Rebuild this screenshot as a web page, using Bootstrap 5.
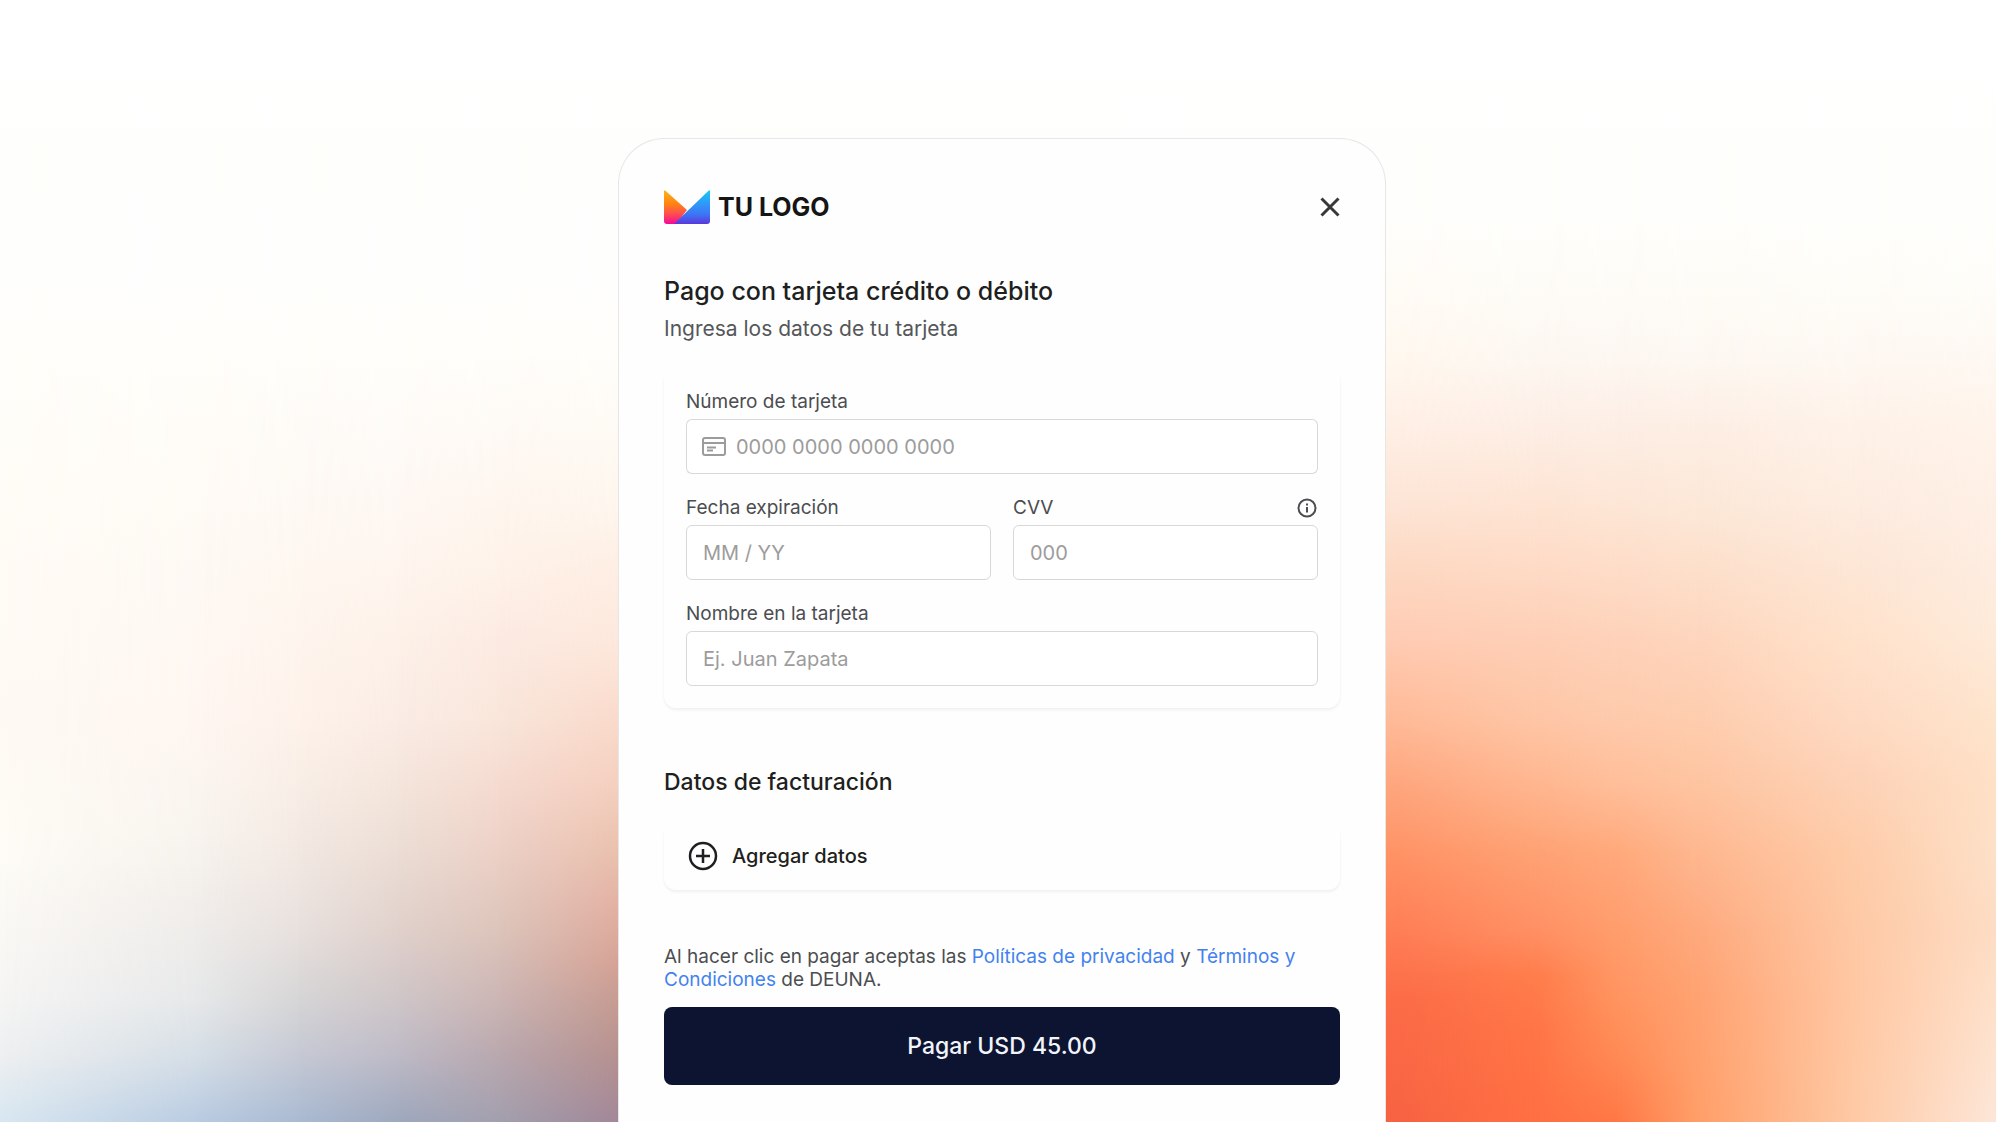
<!DOCTYPE html>
<html lang="es">
<head>
<meta charset="utf-8">
<meta name="viewport" content="width=device-width, initial-scale=1">
<title>Pago con tarjeta</title>
<link href="https://cdn.jsdelivr.net/npm/bootstrap@5.3.0/dist/css/bootstrap.min.css" rel="stylesheet">
<style>
  body { font-family: Inter, "Open Sans", sans-serif; color: #1e1f20; background: #fff; }

  /* Backdrop: vertical colour ramps, each faded in over the one before it */
  .backdrop { z-index: -1; }
  .ramp { position: absolute; inset: 0; -webkit-mask-image: linear-gradient(90deg, transparent var(--from), #000 var(--to)); mask-image: linear-gradient(90deg, transparent var(--from), #000 var(--to)); }
  .ramp-1 { -webkit-mask-image: none; mask-image: none; background: linear-gradient(#fff 4%, #fefefc 14%, #fefefd 24%, #fffefa 31%, #fffbf5 51%, #fefaf3 64%, #fefcf6 76%, #f9f7f4 85%, #f5f5f4 89%, #eef0f1 94%, #d8e7f1); }
  .ramp-2 { --from: 0%; --to: 10%; background: linear-gradient(#fff 4%, #fefefc 14%, #fefefd 24%, #fffefa 31%, #fffcf7 38%, #fef9f3 51%, #fff6f1 64%, #f8f4ee 74%, #f2eeea 80%, #e6e8e9 89%, #d5dee6 94%, #b9cbe1); }
  .ramp-2b { --from: 10%; --to: 15%; background: linear-gradient(#fff 4%, #fefefc 14%, #fefefd 24%, #fffefa 31%, #fefbf7 38%, #fef7f0 51%, #fef2ea 64%, #f8eee6 70%, #f2e8e2 76%, #e7e0dd 83%, #d6d5d6 89%, #c6c9d4 94%, #a9bad2); }
  .ramp-3 { --from: 15%; --to: 20%; background: linear-gradient(#fff 4%, #fefefc 14%, #fefefd 24%, #fffefa 31%, #fefbf8 38%, #fef5ee 51%, #fdf1e8 57%, #faece5 64%, #f4e5db 70%, #ebddd4 76%, #e0d0cb 83%, #cfc6c8 89%, #bebac6 94%, #9ea8bd); }
  .ramp-3b { --from: 20%; --to: 25%; background: linear-gradient(#fff 4%, #fefefc 14%, #fefefd 24%, #fffefa 31%, #fefaf5 38%, #fef2e8 51%, #fceae2 57%, #f9e6da 64%, #f5dad0 70%, #ecd0c6 76%, #dcc4ba 83%, #ccb5b4 89%, #b9a8ae 94%, #a39fae); }
  .ramp-4 { --from: 25%; --to: 31%; background: linear-gradient(#fff 4%, #fefefc 14%, #fefefd 24%, #fffefa 31%, #fefaf4 38%, #fef6ed 45%, #feede3 51%, #fde8dc 57%, #f9dacb 64%, #f4cfbe 70%, #e9c0ad 76%, #e2b0a3 81%, #d5a295 86%, #c69c92 89%, #b69190 94%, #a28798); }
  .ramp-5 { --from: 31%; --to: 69%; background: linear-gradient(#fff 4%, #fefefc 14%, #fefefc 19%, #fffcf7 25%, #fff8ef 32%, #ffefe5 38%, #fde5d6 45%, #fdd8c2 51%, #ffccb4 57%, #ffbb98 64%, #fea67e 70%, #ff9366 76%, #ff7e55 83%, #fc6c47 89%, #f76342); }
  .ramp-6 { --from: 70%; --to: 77%; background: linear-gradient(#fff 4%, #fefefc 14%, #fefefc 19%, #fefcf7 25%, #fdf7f1 32%, #fdeee5 38%, #fee4d3 45%, #fedac5 51%, #fecfb6 57%, #fec6a6 64%, #ffb68f 70%, #fea274 76%, #ff9064 83%, #ff7d4c 87%, #ff7546 92%, #ff6f43); }
  .ramp-7 { --from: 77%; --to: 81%; background: linear-gradient(#fff 4%, #fefefc 14%, #fefefc 19%, #fefcf7 25%, #fdf7f1 32%, #fdeee5 38%, #fde6d6 45%, #fedcc7 51%, #fed2b9 57%, #fecaac 64%, #ffbe99 70%, #ffa97c 76%, #ff9d6c 83%, #ff945f 89%, #ff8a55 94%, #ff7845); }
  .ramp-8 { --from: 81%; --to: 85%; background: linear-gradient(#fff 4%, #fefefc 14%, #fefefc 19%, #fefcf7 25%, #fdf8f2 32%, #fdeee4 38%, #fce8d8 45%, #fddfca 51%, #fed5bd 57%, #fecdae 64%, #fec4a0 70%, #feb78f 76%, #fea97d 83%, #ffa271 89%, #ff9e68); }
  .ramp-9 { --from: 85%; --to: 93%; background: linear-gradient(#fff 4%, #fefefc 14%, #fefefc 19%, #fefdf8 25%, #fef8f2 32%, #fef2e8 38%, #fdece0 45%, #fde6d5 51%, #ffe2cb 57%, #fedac3 64%, #fdd2b6 70%, #fecca9 76%, #fec9a5 83%, #ffc8a4 89%, #fecaa6); }
  .ramp-10 { --from: 93%; --to: 100%; background: linear-gradient(#fff 4%, #fefefc 14%, #fefefc 19%, #fefdf9 25%, #fef8f2 32%, #fff3ea 38%, #feefe5 45%, #fdece0 51%, #feead9 57%, #fee4cc 64%, #fee0c6 70%, #fde0c8 76%, #fddcc4 83%, #fee0ca 89%, #fde6d8); }

  .stage { padding: 138px 0 0 8px; }
  .checkout { max-width: 768px; padding: 45px 45px 36px; background: #fefefe; border: 1px solid #e6e6e5; border-bottom: 0; border-radius: 46px 46px 0 0; }
  .top-bar { height: 46px; }
  .brand-name { font-size: 25px; font-weight: 700; line-height: 32px; color: #151515; margin-left: 8px; }
  .close-btn { line-height: 0; color: #37383a; }
  .section-title { font-size: 25px; line-height: 34px; font-weight: 500; margin: 44px 0 0; }
  .billing-title { font-size: 23px; margin: 57px 0 23px; }
  .sub { font-size: 21px; line-height: 28px; color: #55575a; margin: 7px 0 25px; }
  .panel { background: #fefefe; border-radius: 12px; box-shadow: 0 2px 3px rgba(0,0,0,.06); }
  .fields { padding: 22px; display: grid; gap: 22px; }
  .pair { display: grid; grid-template-columns: 1fr 1fr; gap: 22px; }
  .label-row { height: 24px; margin-bottom: 5px; }
  .label-row label { font-size: 19px; line-height: 24px; color: #4b4d50; }
  .info-btn { line-height: 0; color: #4b4d50; }
  .field { height: 55px; border: 1px solid #d8d8d9; border-radius: 6px; background: #fff; padding: 0 16px; font-size: 20px; line-height: 28px; color: #333; }
  .field::placeholder { color: #9c9c9c; opacity: 1; }
  .input-group-text.lead-icon { border: 1px solid #d8d8d9; border-right: 0; border-radius: 6px; background: #fff; padding: 0 11px 0 15px; color: #9c9c9c; }
  .input-group .field { border-left: 0; padding-left: 0; }
  .add-btn { height: 68px; padding: 0 24px; border: 0; font-size: 20px; line-height: 28px; font-weight: 500; color: #1e1f20; gap: 14px; }
  .legal { font-size: 19px; line-height: 23px; color: #4b4d50; margin: 55px 0 16px; }
  .legal a { color: #4382ee; text-decoration: none; }
  .pay-btn, .pay-btn:hover { height: 78px; border: 0; border-radius: 8px; background: #0c1431; color: #f2f4fa; font-size: 23px; line-height: 34px; font-weight: 500; }
</style>
</head>
<body>
<div class="backdrop position-fixed top-0 start-0 w-100 h-100" aria-hidden="true">
  <div class="ramp ramp-1"></div><div class="ramp ramp-2"></div><div class="ramp ramp-2b"></div><div class="ramp ramp-3"></div><div class="ramp ramp-3b"></div><div class="ramp ramp-4"></div><div class="ramp ramp-5"></div>
  <div class="ramp ramp-6"></div><div class="ramp ramp-7"></div><div class="ramp ramp-8"></div><div class="ramp ramp-9"></div><div class="ramp ramp-10"></div>
</div>

<main class="stage min-vh-100 d-flex flex-column align-items-center">
  <form class="checkout w-100 flex-grow-1">
    <header class="top-bar d-flex align-items-center justify-content-between">
      <div class="d-flex align-items-center">
        <svg width="46" height="34" viewBox="0 0 46 34" aria-hidden="true">
          <defs>
            <linearGradient id="warm" x1="0" y1="0" x2="0" y2="1"><stop offset="0" stop-color="#ffb31a"/><stop offset=".4" stop-color="#ff8412"/><stop offset=".7" stop-color="#ff4e50"/><stop offset="1" stop-color="#f5089a"/></linearGradient>
            <linearGradient id="cool" x1="0" y1="0" x2="0" y2="1"><stop offset="0" stop-color="#10cdf0"/><stop offset=".35" stop-color="#2f9df8"/><stop offset=".7" stop-color="#3b78f6"/><stop offset="1" stop-color="#5b38dc"/></linearGradient>
          </defs>
          <path d="M0 1Q0-.5 1.500.7L23 20 12 34H3Q0 34 0 31Z" fill="url(#warm)"/>
          <path d="M44.500.7Q46-.5 46 1V31Q46 34 43 34H10Z" fill="url(#cool)"/>
        </svg>
        <span class="brand-name">TU LOGO</span>
      </div>
      <button type="button" class="close-btn btn p-0 border-0" aria-label="Cerrar">
        <svg width="20" height="20" viewBox="0 0 20 20" fill="none" stroke="currentColor" stroke-width="3"><path d="M1.500 1.500l17 17M18.500 1.500l-17 17"/></svg>
      </button>
    </header>

    <h1 class="section-title">Pago con tarjeta crédito o débito</h1>
    <p class="sub">Ingresa los datos de tu tarjeta</p>

    <section class="panel fields">
      <div>
        <div class="label-row d-flex align-items-center"><label for="num">Número de tarjeta</label></div>
        <div class="input-group">
          <span class="input-group-text lead-icon">
            <svg width="24" height="19" viewBox="0 0 24 19" fill="none" stroke="currentColor" stroke-width="2"><rect x="1" y="1" width="22" height="17" rx="2"/><path d="M1 6h22M5 10.500h9M5 13.500h6"/></svg>
          </span>
          <input id="num" class="form-control field" type="text" inputmode="numeric" placeholder="0000 0000 0000 0000">
        </div>
      </div>
      <div class="pair">
        <div>
          <div class="label-row d-flex align-items-center"><label for="exp">Fecha expiración</label></div>
          <input id="exp" class="form-control field" type="text" placeholder="MM / YY">
        </div>
        <div>
          <div class="label-row d-flex align-items-center justify-content-between">
            <label for="cvv">CVV</label>
            <button type="button" class="info-btn btn p-0 border-0" aria-label="Información sobre el CVV">
              <svg width="22" height="22" viewBox="0 0 22 22" fill="none" stroke="currentColor" stroke-width="2"><circle cx="11" cy="11" r="8.500"/><path d="M11 10v5.500M11 6.500v2"/></svg>
            </button>
          </div>
          <input id="cvv" class="form-control field" type="text" inputmode="numeric" placeholder="000">
        </div>
      </div>
      <div>
        <div class="label-row d-flex align-items-center"><label for="name">Nombre en la tarjeta</label></div>
        <input id="name" class="form-control field" type="text" placeholder="Ej. Juan Zapata">
      </div>
    </section>

    <h2 class="section-title billing-title">Datos de facturación</h2>
    <button type="button" class="panel add-btn btn w-100 d-flex align-items-center">
      <svg width="30" height="30" viewBox="0 0 30 30" fill="none" stroke="currentColor" stroke-width="2.500"><circle cx="15" cy="15" r="13"/><path d="M15 8v14M8 15h14"/></svg>
      Agregar datos
    </button>

    <p class="legal">Al hacer clic en pagar aceptas las <a href="#">Políticas de privacidad</a> y <a href="#">Términos y Condiciones</a> de DEUNA.</p>
    <button type="submit" class="pay-btn btn w-100">Pagar USD 45.00</button>
  </form>
</main>
<script src="https://cdn.jsdelivr.net/npm/bootstrap@5.3.0/dist/js/bootstrap.bundle.min.js"></script>
</body>
</html>
